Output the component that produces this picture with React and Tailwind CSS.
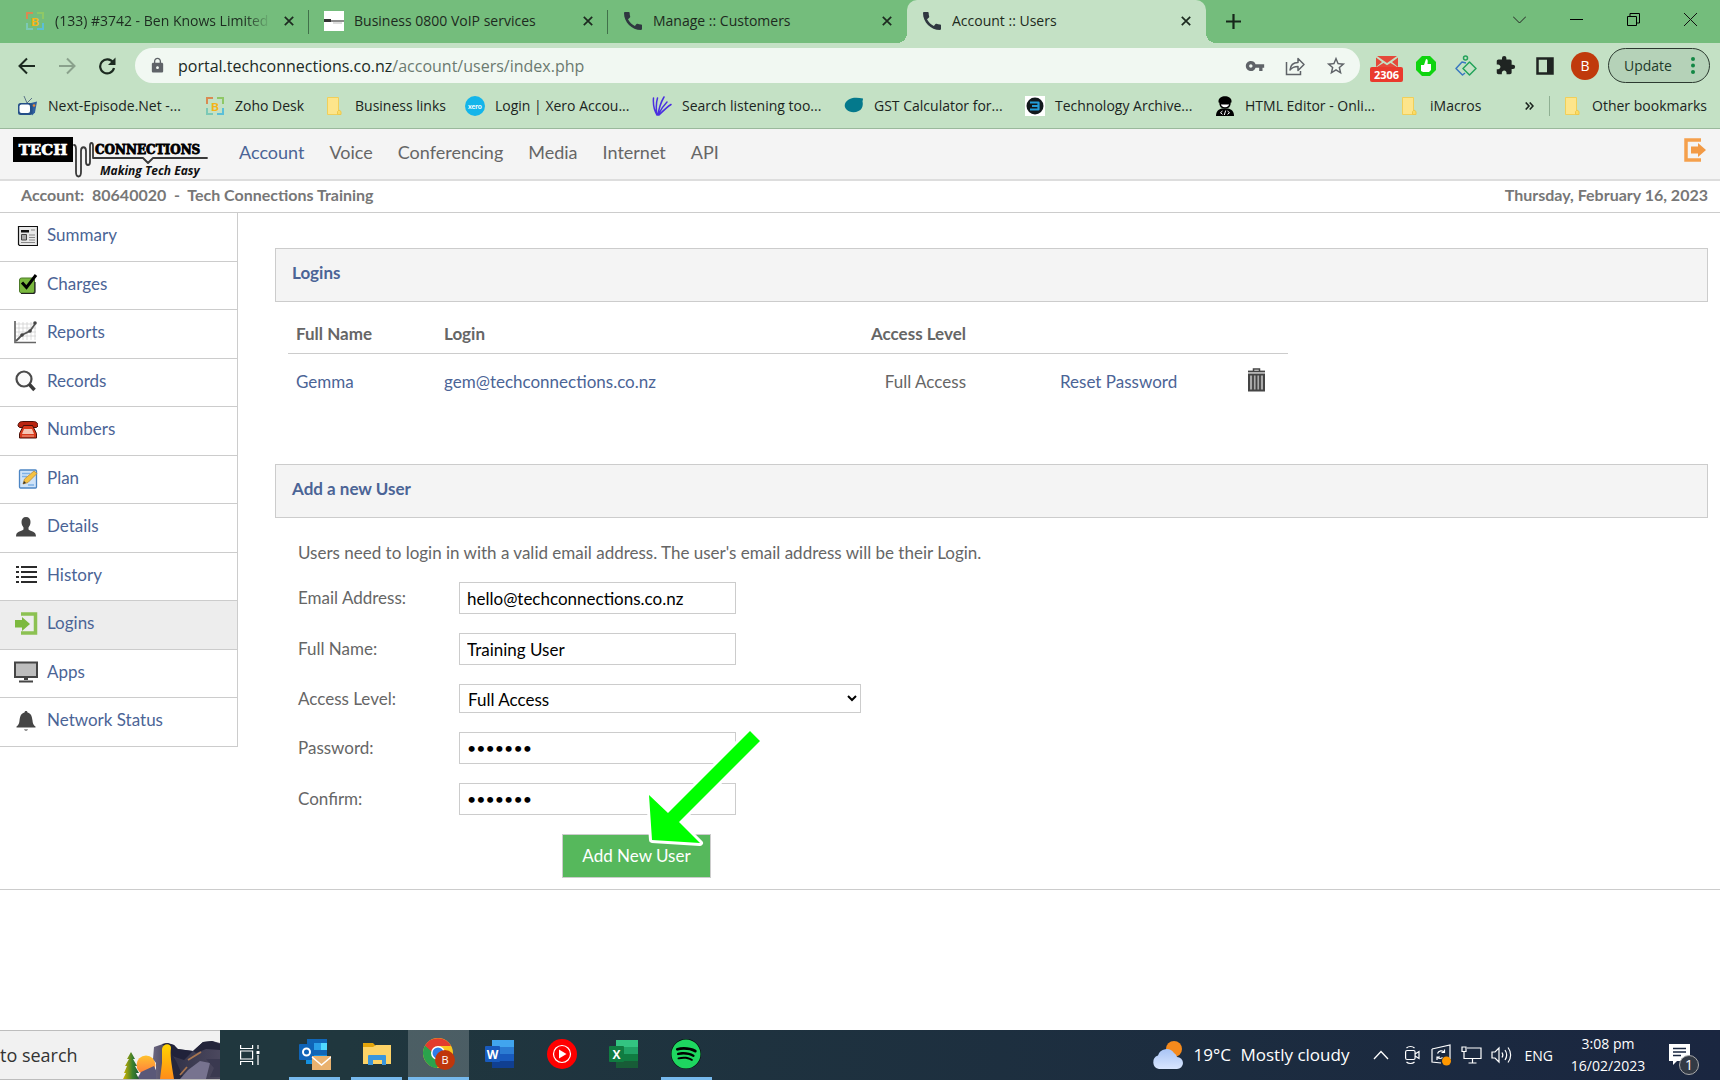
import React from "react";
import { MdCall, MdExtension, MdLock, MdStarBorder, MdVpnKey } from "react-icons/md";
import { FaSpotify } from "react-icons/fa";

/* ---------- browser icons ---------- */

const BrandB = () => (
  <svg viewBox="0 0 20 20" className="size-5 shrink-0" fill="none" strokeWidth="2">
    <path d="M2 8V2h6" stroke="#d98a52" />
    <path d="M12 2h6v6" stroke="#8fc866" />
    <path d="M18 12v6h-6" stroke="#5bbfd8" />
    <path d="M8 18H2v-6" stroke="#7cc9b6" />
    <text x="10" y="14.5" textAnchor="middle" fontSize="12" fontWeight="900" fontFamily="Lato, sans-serif" fill="#f5b417">B</text>
  </svg>
);
const SiteThumb = () => (
  <svg viewBox="0 0 20 20" className="size-5 shrink-0">
    <rect width="20" height="20" fill="#fff" />
    <rect y="8" width="7" height="3" fill="#333" />
    <path d="M7 10h13" stroke="#666" strokeWidth="1.500" /><path d="M9 12h9" stroke="#bbb" strokeWidth="1" />
  </svg>
);
const Phone = () => <MdCall className="size-6 -mx-0.5 shrink-0 text-[#2f3740]" />;

const CloseX = ({ label }) => (
  <button aria-label={label} className="flex size-4 shrink-0 items-center justify-center">
    <svg viewBox="0 0 10 10" className="size-[10px]"><path d="M.8.8l8.4 8.4M9.2.8L.8 9.2" stroke="#1d2a20" strokeWidth="1.700" /></svg>
  </button>
);

const Folder = () => (
  <svg viewBox="0 0 16 20" className="h-5 w-4 shrink-0">
    <path d="M1.500 1.500h11v13l2 1v3h-13z" fill="#fde58b" stroke="#f0cf5a" />
    <path d="M11.500 18.500v-3l1.500-1.500 2 1.500v3z" fill="#fbdc66" stroke="#eec84c" />
  </svg>
);
const Tv = () => (
  <svg viewBox="0 0 20 20" className="size-5 shrink-0">
    <path d="M9 7L6 0M9 7l5-5" stroke="#5b7488" fill="none" />
    <path d="M13 7l6-1.500-2 11-3 3z" fill="#2f5f9e" />
    <rect x="0" y="7" width="14.500" height="12" rx="2.500" fill="#244f88" />
    <rect x="1.500" y="8.500" width="10.500" height="8.500" rx="2" fill="#fff" />
    <circle cx="16" cy="9.500" r="1.300" fill="#e8883a" />
  </svg>
);
const Xero = () => (
  <svg viewBox="0 0 20 20" className="size-5 shrink-0">
    <circle cx="10" cy="10" r="10" fill="#13b5ea" />
    <text x="10" y="12.500" textAnchor="middle" fontSize="7" fontWeight="700" fontFamily="Lato, sans-serif" fill="#fff">xero</text>
  </svg>
);
const Rays = () => (
  <svg viewBox="0 0 20 20" className="size-5 shrink-0" stroke="#4a2fe0" strokeWidth="1.500" fill="none" strokeLinecap="round">
    <path d="M5 19C2 14 1 8 1.500 2M5 19C4 13 4 7 5.500 2M6 19C7 12 9 6 12 1M6 19C9 13 12 9 15 6M7 19C11 15 15 11 19 8.500" />
  </svg>
);
const Blob = () => (
  <svg viewBox="0 0 20 20" className="size-5 shrink-0"><path d="M4 4c4-3 10-2.500 15-1.500 0 1.500-.5 2-.5 3 1 4-.5 8-4 9.500-4 2-9 1.500-12-1.500-3-3-2-7 1.500-9.500z" fill="#04798c" /></svg>
);
const Badge3 = () => (
  <svg viewBox="0 0 20 20" className="size-5 shrink-0">
    <rect width="20" height="20" fill="#fff" /><circle cx="10" cy="10" r="8.500" fill="#12181c" />
    <path d="M5 6.500h8.500v7H5M7 10h6.500" stroke="#239bd8" strokeWidth="2.200" fill="none" strokeLinejoin="round" />
  </svg>
);
const Coder = () => (
  <svg viewBox="0 0 20 20" className="size-5 shrink-0">
    <path d="M3.500 5c0-6.500 13-6.500 13 0v1.500h-13z" fill="#000" />
    <path d="M5 6.500h10c0 3-1.500 5.500-5 5.500s-5-2.500-5-5.500z" fill="#fff" stroke="#000" strokeWidth="1.500" />
    <path d="M5 7h10v1.500H5z" fill="#000" />
    <path d="M1 20c0-5 3-7 6-7.500h6c3 .5 6 2.500 6 7.500z" fill="#000" />
    <path d="M7.500 15l-2 1.700 2 1.700M12.500 15l2 1.700-2 1.700M10.700 14.500l-1.400 4.500" stroke="#fff" fill="none" />
  </svg>
);

const tabs = [
  { icon: BrandB, title: "(133) #3742 - Ben Knows Limited", sep: true, fade: true },
  { icon: SiteThumb, title: "Business 0800 VoIP services", sep: true },
  { icon: Phone, title: "Manage :: Customers" },
  { icon: Phone, title: "Account :: Users", active: true },
];

const bookmarks = [
  { icon: Tv, text: "Next-Episode.Net -...", w: "w-[187px]" },
  { icon: BrandB, text: "Zoho Desk", w: "w-[121px]" },
  { icon: Folder, text: "Business links", w: "w-[139px]", folder: true },
  { icon: Xero, text: "Login | Xero Accou...", w: "w-[187px]" },
  { icon: Rays, text: "Search listening too...", w: "w-[192px]" },
  { icon: Blob, text: "GST Calculator for...", w: "w-[181px]" },
  { icon: Badge3, text: "Technology Archive...", w: "w-[190px]" },
  { icon: Coder, text: "HTML Editor - Onli...", w: "w-[186px]" },
  { icon: Folder, text: "iMacros", w: "w-[100px]", folder: true },
];

function TabStrip() {
  return (
    <div className="flex h-[43px] items-stretch bg-[#74bd7c] pl-[10px] text-[14px] text-[#1d2a20]">
      {tabs.map((t) => (
        <div
          key={t.title}
          className={
            "relative flex w-[299px] shrink-0 items-center gap-[10px] pb-0.5 pl-[15px] pr-3 " +
            (t.active ? "rounded-t-[10px] bg-[#c4e1c5]" : "")
          }
        >
          <t.icon />
          <span className={"min-w-0 flex-1 overflow-hidden whitespace-nowrap " + (t.fade ? "[mask-image:linear-gradient(to_right,#000_88%,transparent)]" : "")}>
            {t.title}
          </span>
          <CloseX label={"Close " + t.title} />
          {t.sep && <span className="absolute right-0 top-[10px] h-6 w-px bg-[#41704a]" />}
          {t.active && (
            <>
              <span className="absolute -left-[10px] bottom-0 size-[10px] bg-[radial-gradient(circle_at_0_0,#74bd7c_10px,#c4e1c5_10px)]" />
              <span className="absolute -right-[10px] bottom-0 size-[10px] bg-[radial-gradient(circle_at_100%_0,#74bd7c_10px,#c4e1c5_10px)]" />
            </>
          )}
        </div>
      ))}
      <button aria-label="New tab" className="ml-5 self-center">
        <svg viewBox="0 0 15 15" className="size-[15px]"><path d="M7.500 0v15M0 7.500h15" stroke="#16261a" strokeWidth="2.200" /></svg>
      </button>
      <div className="ml-auto flex h-[38px] items-center gap-[44px] pr-[23px]">
        <button aria-label="Search tabs"><svg viewBox="0 0 13 13" className="size-[13px]"><path d="M0 3.500l6.500 6.500L13 3.500" stroke="#222" fill="none" /></svg></button>
        <button aria-label="Minimise"><svg viewBox="0 0 13 13" className="size-[13px]"><path d="M0 6.500h13" stroke="#000" /></svg></button>
        <button aria-label="Restore"><svg viewBox="0 0 13 13" className="size-[13px]" fill="none" stroke="#000"><path d="M.5 3.500h9v9h-9zM3 3V.5h9.500V10H10" /></svg></button>
        <button aria-label="Close"><svg viewBox="0 0 13 13" className="size-[13px]"><path d="M0 0l13 13M13 0L0 13" stroke="#111" /></svg></button>
      </div>
    </div>
  );
}

function Toolbar() {
  return (
    <div className="flex h-[45px] items-center bg-[#c4e1c5] pl-[18px] pr-[10px]">
      <div className="flex w-[117px] items-center gap-[22px]">
        <button aria-label="Back"><svg viewBox="0 0 18 18" className="size-[18px]" fill="none" stroke="#1c2a20" strokeWidth="2"><path d="M17 9H2M9 1.500L1.500 9 9 16.500" /></svg></button>
        <button aria-label="Forward"><svg viewBox="0 0 18 18" className="size-[18px]" fill="none" stroke="#8aa18c" strokeWidth="2"><path d="M1 9h15M9 1.500L16.500 9 9 16.500" /></svg></button>
        <button aria-label="Reload"><svg viewBox="0 0 18 18" className="size-[18px]"><path d="M15 5.500A7 7 0 1 0 16 11" fill="none" stroke="#1c2a20" strokeWidth="2.200" /><path d="M17.500.5v7.500H10z" fill="#1c2a20" /></svg></button>
      </div>
      <div className="flex h-[35px] flex-1 items-center rounded-full bg-[#f1f8f2] pl-[14px] pr-[13px] text-[#5f6368]">
        <MdLock className="size-[17px]" />
        <div role="textbox" aria-label="Address" className="ml-3 flex-1 text-[16px] text-[#6b7a70]">
          <span className="text-[#202a24]">portal.techconnections.co.nz</span>/account/users/index.php
        </div>
        <div className="flex items-center gap-5">
          <button aria-label="Passwords"><MdVpnKey className="size-5" /></button>
          <button aria-label="Share">
            <svg viewBox="0 0 20 20" className="size-5" fill="none" stroke="#5f6368" strokeWidth="1.500">
              <path d="M1.500 6v12.500h14V15" /><path d="M5 14c.5-5 3-7.500 8-7.500v-4l6 6-6 6v-4c-4 0-6 1-8 3.500z" strokeLinejoin="round" />
            </svg>
          </button>
          <button aria-label="Bookmark"><MdStarBorder className="size-[22px]" /></button>
        </div>
      </div>
      <div className="ml-[10px] flex items-center">
        <button aria-label="Mail" className="flex w-[33px] flex-col items-center pt-[6px]">
          <svg viewBox="0 0 22 11" className="h-[11px] w-[22px]"><path d="M1 0h20L11 7z" fill="#e5493a" /><path d="M0 1.500l6 4.500-6 5zM22 1.500L16 6l6 5zM1 11l6.500-4L11 9.300 14.500 7l6.500 4z" fill="#e5493a" /></svg>
          <span className="w-[33px] rounded-xs bg-[#ea3a2d] text-center text-[11px] leading-[15px] font-bold text-white">2306</span>
        </button>
        <button aria-label="Thumbs up" className="ml-3">
          <svg viewBox="0 0 22 22" className="size-[22px]"><path d="M7 1h8l6 6v8l-6 6H7l-6-6V7z" fill="#0fd40f" /><path d="M6 10h3l2-6c2 0 2 2 1.500 5H16v6l-2 2H8l-2-1z" fill="#fff" /></svg>
        </button>
        <button aria-label="Zoho" className="ml-[18px]">
          <svg viewBox="0 0 22 22" className="size-[22px]" fill="none" strokeWidth="1.500">
            <path d="M11 8L7 7l-6 6.500 6.500 6.500 2.500-2" stroke="#3a78c0" strokeLinejoin="round" /><path d="M14.500 7l6.500 6.500-6.500 6.500L8 13.500z" stroke="#23a35a" strokeLinejoin="round" /><circle cx="10.500" cy="3" r="2" stroke="#23a35a" />
          </svg>
        </button>
        <button aria-label="Extensions" className="ml-[18px]"><MdExtension className="size-[21px] text-[#1f2422]" /></button>
        <button aria-label="Side panel" className="ml-5"><svg viewBox="0 0 18 18" className="size-[18px]"><path d="M1.500 1.500h15v15h-15z" fill="none" stroke="#1f2422" strokeWidth="2.500" /><path d="M11 1h6v16h-6z" fill="#1f2422" /></svg></button>
        <button className="ml-[17px] flex size-7 items-center justify-center rounded-full bg-[#c03a0c] text-[14px] text-white">B</button>
        <button className="ml-[9px] flex h-[35px] w-[102px] items-center justify-between rounded-full border border-[#2c3a30] bg-[#b5d2b8] pl-[15px] pr-[14px] text-[14px] text-[#1f3a2a]">
          Update
          <svg viewBox="0 0 4 17" className="h-[17px] w-1" fill="#128744"><circle cx="2" cy="2" r="2" /><circle cx="2" cy="8.500" r="2" /><circle cx="2" cy="15" r="2" /></svg>
        </button>
      </div>
    </div>
  );
}

function Bookmarks() {
  return (
    <div className="flex h-[41px] items-center border-b border-[#9ab89c] bg-[#c4e1c5] pb-[5px] pl-[18px] text-[14px] text-[#1b241e]">
      {bookmarks.map((b) => (
        <a href="#" key={b.text} className={"flex shrink-0 items-center whitespace-nowrap " + b.w + (b.folder ? " gap-[13px]" : " gap-[10px]")}>
          <b.icon />
          {b.text}
        </a>
      ))}
      <button aria-label="More bookmarks" className="ml-auto"><svg viewBox="0 0 9 8" className="h-2 w-[9px]" fill="none" stroke="#1b241e" strokeWidth="1.600"><path d="M.7.5L4 4 .7 7.500M4.700.5L8 4 4.700 7.500" /></svg></button>
      <span className="ml-[15px] h-5 w-px bg-[#8fb093]" />
      <a href="#" className="ml-[14px] mr-[13px] flex items-center gap-3 whitespace-nowrap"><Folder />Other bookmarks</a>
    </div>
  );
}

/* ---------- portal ---------- */

function Logo() {
  return (
    <svg viewBox="0 0 198 50" className="h-[50px] w-[198px] shrink-0" role="img" aria-label="Tech Connections, Making Tech Easy">
      <rect x="0" y="8" width="60" height="25" fill="#000" />
      <text x="30" y="26" textAnchor="middle" fontFamily="'DejaVu Serif', serif" fontWeight="700" fontSize="15" fill="#fff" stroke="#fff" strokeWidth=".7">TECH</text>
      <path d="M61 16c2 0 2 2 2 4v23c0 6 5 6 5 0V22c0-5 5-5 5 0v11c0 4 4 4 4 0V17c0-4 3-4 3 0v12h50l5 5 5-5h54" fill="none" strokeLinejoin="round" strokeLinecap="round" stroke="#3a3a3a" strokeWidth="1.800" />
      <text x="82" y="25" fontFamily="'DejaVu Serif', serif" fontWeight="700" fontSize="12" fill="#000" stroke="#000" strokeWidth=".8">CONNECTIONS</text>
      <text x="87" y="46" fontFamily="'Open Sans', sans-serif" fontWeight="700" fontStyle="italic" fontSize="12" fill="#111">Making Tech Easy</text>
    </svg>
  );
}

const ic = "size-6";
const SummaryIcon = () => (
  <svg viewBox="0 0 24 24" className={ic}><path d="M4.500 3.500h19v19h-18l-1-1z" fill="#e8e8e8" stroke="#111" strokeWidth="1.200" /><path d="M7 7h8v2.500H7z" fill="#111" /><path d="M17 7h4M15 12h6M15 14.500h6M15 17h6M7 19.500h14" stroke="#888" /><path d="M7.500 11.500h5v5.500h-5z" fill="#aaa" stroke="#444" /></svg>
);
const ChargesIcon = () => (
  <svg viewBox="0 0 24 24" className={ic}><rect x="5.500" y="6" width="15" height="15" rx="2" fill="#7ab83e" stroke="#4c7a28" /><path d="M7 21.500h12q2 0 2-2V10" stroke="#222" strokeWidth="1.200" fill="none" /><path d="M8 10.500l4.500 5L22 3" fill="none" stroke="#000" strokeWidth="3" /></svg>
);
const ReportsIcon = () => (
  <svg viewBox="0 0 24 24" className={ic}><path d="M5 2v18M9 2v18M13 2v18M17 2v18M21 2v18M2 4h20M2 8h20M2 12h20M2 16h20" stroke="#ccc" strokeWidth=".7" /><path d="M1 1v21.500H22" fill="none" stroke="#666" strokeWidth="1.700" /><path d="M2 21l6-6 8-4L21 4" fill="none" stroke="#555" strokeWidth="1.800" /><g fill="#444"><circle cx="8" cy="15" r="1.800" /><circle cx="16" cy="11" r="1.800" /><circle cx="21" cy="3" r="1.800" /></g></svg>
);
const RecordsIcon = () => (
  <svg viewBox="0 0 24 24" className={ic}><circle cx="10" cy="10" r="7.500" fill="#fafafa" stroke="#4a4a4a" strokeWidth="2.200" /><path d="M15 15l5.500 6" stroke="#3a3a3a" strokeWidth="3.500" /></svg>
);
const NumbersIcon = () => (
  <svg viewBox="0 0 24 24" className={ic}><path d="M4 9c0-4 3-4.500 5-4.500h10c2 0 5 .5 5 4.500l-1.500 1.500H18.500V8.500h-9v2H5.500z" fill="#b92410" stroke="#4d1109" /><path d="M9.500 8.500h9l4 8V21h-17v-4.500z" fill="#d83a1c" stroke="#4d1109" /><path d="M10 12h8l2 5H8z" fill="#f6c6b4" /><path d="M8 19h12" stroke="#f0a890" /></svg>
);
const PlanIcon = () => (
  <svg viewBox="0 0 24 24" className={ic}><rect x="5.500" y="4" width="17" height="18" rx="1" fill="#cfe3f8" stroke="#4d86c4" strokeWidth="1.300" /><path d="M8 7.500h8M8 10.500h5M14 19h6" stroke="#7fb2e6" strokeWidth="1.500" /><path d="M9 18l1.500-5L20 5l3 2.500-9 9z" fill="#f5c242" stroke="#b98a3a" strokeWidth=".8" /><path d="M9 18l1-3 2 2z" fill="#333" /></svg>
);
const DetailsIcon = () => (
  <svg viewBox="0 0 24 24" className={ic}><path d="M12 3c3 0 4.500 2 4.500 5 0 2.500-1 4-2 5.500v2c2.500 2 7.500 1.500 7.500 7H2c0-5.500 5-5 7.500-7v-2c-1-1.500-2-3-2-5.500 0-3 1.500-5 4.500-5z" fill="#454545" /></svg>
);
const HistoryIcon = () => (
  <svg viewBox="0 0 24 24" className={ic}><path d="M7 4h16M7 9h16M7 14h16M7 19h16" stroke="#2b2b2b" strokeWidth="2.200" /><path d="M2 4h3M2 9h3M2 14h3M2 19h3" stroke="#2b2b2b" strokeWidth="2.200" /></svg>
);
const LoginsIcon = () => (
  <svg viewBox="0 0 24 24" className={ic}><path d="M7 3h14.500v19H7" fill="none" stroke="#8cc152" strokeWidth="3.500" /><path d="M1 9h7V6l8 7-8 7v-3.500H1z" fill="#7db93f" /></svg>
);
const AppsIcon = () => (
  <svg viewBox="0 0 24 24" className={ic}><rect x="1" y="2.500" width="22" height="14.500" fill="#bdbdbd" stroke="#454545" strokeWidth="2" /><path d="M10 17h4v3h-4z" fill="#454545" /><path d="M5 21.500h14" stroke="#454545" strokeWidth="2" /></svg>
);
const BellIcon = () => (
  <svg viewBox="0 0 24 24" className={ic}><path d="M12 3c1 0 1.500.7 1.500 1.500 4 1 4.500 4.500 5 8 .4 3.500 1 4.500 3 6v1h-19v-1c2-1.500 2.600-2.500 3-6 .5-3.500 1-7 5-8C10.500 3.700 11 3 12 3z" fill="#454545" /><path d="M10 21.500h4c-.5 1.500-3.500 1.500-4 0z" fill="#454545" /></svg>
);
const Trash = () => (
  <svg viewBox="0 0 20 24" className="h-6 w-5"><path d="M6.500 3V1h6v2" fill="none" stroke="#444" strokeWidth="1.500" /><path d="M1 3.500h17" stroke="#444" strokeWidth="1.800" /><rect x="2" y="6.500" width="15" height="16" fill="#aaa" stroke="#444" strokeWidth="2" /><path d="M6 7v15M9.500 7v15M13 7v15" stroke="#444" strokeWidth="1.800" /></svg>
);

const menu = [
  ["Summary", SummaryIcon], ["Charges", ChargesIcon], ["Reports", ReportsIcon], ["Records", RecordsIcon],
  ["Numbers", NumbersIcon], ["Plan", PlanIcon], ["Details", DetailsIcon], ["History", HistoryIcon],
  ["Logins", LoginsIcon], ["Apps", AppsIcon], ["Network Status", BellIcon],
];

const inputCls = "h-8 w-[277px] border border-[#ccc] bg-white px-[7px] text-black";

function Panel({ title }) {
  return <h2 className="h-[54px] border border-[#ccc] bg-[#f4f4f4] pl-4 pt-3 font-bold leading-6 text-[#4b6496]">{title}</h2>;
}

function Portal() {
  return (
    <div className="flex-1 bg-white font-[Lato,sans-serif] text-[17px] leading-6 text-[#666]">
      <header className="flex h-[52px] items-center border-b-2 border-[#ddd] bg-[#f4f4f4] pl-[13px] pr-[13px]">
        <Logo />
        <nav className="ml-7 flex gap-[25px] pb-[5px] text-[18px]">
          <a href="#" className="text-[#4b6496]">Account</a>
          <a href="#">Voice</a><a href="#">Conferencing</a><a href="#">Media</a><a href="#">Internet</a><a href="#">API</a>
        </nav>
        <button aria-label="Log out" className="ml-auto pb-2">
          <svg viewBox="0 0 24 24" className="size-6"><path d="M18 2H3v20h15" fill="none" stroke="#f5a04c" strokeWidth="3.500" /><path d="M8 8.500h7V5l8 7-8 7v-3.500H8z" fill="#f29a45" /></svg>
        </button>
      </header>
      <div className="flex h-8 items-center justify-between border-b border-[#ccc] pb-[3px] pl-[21px] pr-3 text-[16px] font-bold text-[#777]">
        <span className="whitespace-pre">Account:  80640020  -  Tech Connections Training</span>
        <span>Thursday, February 16, 2023</span>
      </div>
      <div className="flex items-start border-b border-[#ccc]">
        <nav className="w-[238px] shrink-0 border-r border-[#ccc]">
          {menu.map(([name, Icon]) => (
            <a key={name} href="#" className={"flex h-12 items-center gap-[9px] border-b border-[#ccc] pb-1 pl-[14px] text-[#4b6496] odd:h-[49px] " + (name === "Logins" ? "bg-[#ededed]" : "")}>
              <Icon />
              <span>{name}</span>
            </a>
          ))}
        </nav>
        <main className="min-w-0 flex-1 pb-[11px] pl-[37px] pr-3 pt-[35px]">
          <Panel title="Logins" />
          <table className="ml-[13px] w-[1000px] table-fixed">
            <colgroup><col className="w-[148px]" /><col className="w-[390px]" /><col className="w-[148px]" /><col className="w-[265px]" /><col /></colgroup>
            <thead>
              <tr className="border-b border-[#ccc] text-left">
                <th className="pb-[7px] pl-2 pt-5">Full Name</th>
                <th className="pb-[7px] pl-2 pt-5">Login</th>
                <th className="pb-[7px] pr-2 pt-5 text-right">Access Level</th>
                <th aria-label="Password" />
                <th aria-label="Delete" />
              </tr>
            </thead>
            <tbody>
              <tr className="text-[#4b6496]">
                <td className="pb-[14px] pl-2 pt-4"><a href="#">Gemma</a></td>
                <td className="pb-[14px] pl-2 pt-4"><a href="#">gem@techconnections.co.nz</a></td>
                <td className="pb-[14px] pr-2 pt-4 text-right text-[#666]">Full Access</td>
                <td className="pb-[14px] pl-[86px] pt-4"><a href="#">Reset Password</a></td>
                <td className="pb-[3px] pl-2"><button aria-label="Delete Gemma" className="block"><Trash /></button></td>
              </tr>
            </tbody>
          </table>
          <div className="mt-14"><Panel title="Add a new User" /></div>
          <form className="pl-[23px] pt-[23px]" onSubmit={(e) => e.preventDefault()}>
            <p>Users need to login in with a valid email address. The user's email address will be their Login.</p>
            <div className="relative mt-[17px] grid w-[563px] grid-cols-[161px_1fr] items-center gap-y-[19px]">
              <label htmlFor="email">Email Address:</label>
              <input id="email" type="text" defaultValue="hello@techconnections.co.nz" className={inputCls} />
              <label htmlFor="name">Full Name:</label>
              <input id="name" type="text" defaultValue="Training User" className={inputCls} />
              <label htmlFor="level">Access Level:</label>
              <select id="level" className="h-[29px] w-full border border-[#ccc] bg-white pl-1 pt-0.5 text-black"><option>Full Access</option></select>
              <label htmlFor="pw">Password:</label>
              <input id="pw" type="password" defaultValue="trainin" className={inputCls + " pb-0.5 text-[16px]"} />
              <label htmlFor="pw2">Confirm:</label>
              <input id="pw2" type="password" defaultValue="trainin" className={inputCls + " pb-0.5 text-[16px]"} />
              <button type="submit" className="col-start-2 ml-[103px] h-11 w-[149px] border border-[#ccc] bg-[#56b85c] text-white">Add New User</button>
              <svg viewBox="0 0 120 120" className="pointer-events-none absolute left-[346px] top-[145px] size-[120px]" aria-hidden="true">
                <path d="M106 4l10 10-81 81 21 21-48-3-3-45 19 18z" fill="#00ff00" stroke="#fff" strokeWidth="6" strokeLinejoin="round" paintOrder="stroke" />
              </svg>
            </div>
          </form>
        </main>
      </div>
    </div>
  );
}

/* ---------- taskbar ---------- */

function SearchArt() {
  return (
    <svg viewBox="0 0 98 38" className="h-[38px] w-[98px] shrink-0">
      <defs>
        <linearGradient id="fall" x2="0" y2="1"><stop stopColor="#ffd400" /><stop offset="1" stopColor="#ff8c1a" /></linearGradient>
        <linearGradient id="sun" x2="0" y2="1"><stop stopColor="#ffc22e" /><stop offset="1" stopColor="#ff7a3c" /></linearGradient>
        <linearGradient id="tree"><stop stopColor="#d4b400" /><stop offset=".6" stopColor="#3b7f2d" /><stop offset="1" stopColor="#1d5a35" /></linearGradient>
        <linearGradient id="rock"><stop stopColor="#6b6680" /><stop offset=".35" stopColor="#34344a" /><stop offset="1" stopColor="#4b485e" /></linearGradient>
      </defs>
      <circle cx="24" cy="24" r="9.500" fill="url(#sun)" />
      <path d="M15 38l4-7 13-6 6 13z" fill="#5a5878" />
      <path d="M34 38V22l-3-4 1-12 12-4 8 2 3 4 16 2 10-9 9-1 8 2v36z" fill="url(#rock)" />
      <path d="M40 3l6-1 6 2 4 4 15 2-9 9-12-4-5-8z" fill="#20223a" />
      <path d="M71 10l10-9 9-1 8 3v6L84 8 74 12z" fill="#23243a" />
      <path d="M47 8l7 12 8 18H51z" fill="#25273d" />
      <path d="M58 38l8-9 12-9 10 2-4 16z" fill="#77738f" />
      <path d="M84 18l8 9-4 9h10V18z" fill="#3a3950" />
      <path d="M66 19l13-8M58 34l7-8" stroke="#a8754f" strokeWidth="1.800" />
      <path d="M38 38l2-16V8c1-6 9-6 9-1-1 6 0 14 3 31z" fill="url(#fall)" />
      <path d="M9 11l4 7h-2l4 7h-2l4 7h-3l3 6H1l3-6H2l3-7H3l4-7H5z" fill="url(#tree)" />
    </svg>
  );
}

function AppButton({ label, children, running, active, className }) {
  return (
    <button aria-label={label} className={"flex h-full shrink-0 flex-col items-center " + className + (active ? " bg-white/20" : "")}>
      <span className="flex flex-1 items-center pt-px">{children}</span>
      <span className={"h-[3px] " + (running ? "bg-[#76b9ed] " : "") + (active ? "w-full" : "w-[51px]")} />
    </button>
  );
}

const OfficeTile = ({ letter, c }) => (
  <svg viewBox="0 0 30 28" className="h-7 w-[30px]">
    <rect x="7" y="0" width="22" height="7" fill={c[0]} /><rect x="7" y="7" width="22" height="7" fill={c[1]} />
    <rect x="7" y="14" width="22" height="7" fill={c[2]} /><rect x="7" y="21" width="22" height="7" fill={c[3]} />
    <rect x="0" y="6" width="15" height="16" rx="1" fill={c[4]} />
    <text x="7.500" y="18.500" textAnchor="middle" fontSize="12" fontWeight="700" fontFamily="'Open Sans', sans-serif" fill="#fff">{letter}</text>
  </svg>
);

function Taskbar() {
  return (
    <footer className="flex h-[50px] shrink-0 items-center bg-linear-to-r from-[#20373e] from-20% to-[#1a2640] text-white">
      <div className="flex h-full w-[220px] shrink-0 items-center justify-end overflow-hidden border-y border-[#bdbdbd] bg-[#f1f1f1]">
        <span className="flex-1 text-[18px] text-[#333]">to search</span>
        <span className="self-end"><SearchArt /></span>
      </div>
      <button aria-label="Task view" className="ml-5">
        <svg viewBox="0 0 20 20" className="size-5" fill="none" stroke="#fff" strokeWidth="1.200"><path d="M.6 0v3.500h12V0M.6 20v-3.500h12V20M.6 6h12v8H.6zM18 0v4M18 10v10" /><path d="M16.500 6h3v3h-3z" fill="#fff" stroke="none" /></svg>
      </button>
      <AppButton label="Outlook" running className="ml-6 w-[61px]">
        <svg viewBox="0 0 32 32" className="size-8">
          <rect x="8" y="1" width="20" height="16" fill="#1066b8" /><rect x="15" y="5" width="7" height="7" fill="#2a9fe8" /><rect x="22" y="5" width="6" height="7" fill="#50d9ff" />
          <path d="M7 17h21v9H7z" fill="#1490df" /><rect x="0" y="6" width="15" height="16" rx="1" fill="#0f64b8" />
          <circle cx="7.500" cy="14" r="3.500" fill="none" stroke="#fff" strokeWidth="2" /><rect x="13" y="18" width="19" height="14" fill="#eab26f" /><path d="M13 19l9.500 8 9.500-8" fill="none" stroke="#fff" strokeWidth="1.500" />
        </svg>
      </AppButton>
      <AppButton label="File Explorer" running className="w-[63px]">
        <svg viewBox="0 0 28 24" className="h-6 w-7"><path d="M0 1h10l3 3h14v18H0z" fill="#e4a50b" /><path d="M0 5h10l3-2h15v19H0z" fill="#fdd367" /><path d="M5 23v-9q0-1 1-1h16q1 0 1 1v9h-4v-5h-9v5z" fill="#3a96dd" /></svg>
      </AppButton>
      <AppButton label="Chrome" running active className="w-[61px]">
        <svg viewBox="0 0 32 32" className="size-8">
          <circle cx="15" cy="15" r="15" fill="#fbc51e" /><path d="M2 7.500A15 15 0 0 0 14 30l7-12-6-3z" fill="#2ba24c" /><path d="M2 7.500A15 15 0 0 1 28 8H15l-6 6z" fill="#e33b2e" />
          <circle cx="15" cy="15" r="7" fill="#fff" /><circle cx="15" cy="15" r="5.500" fill="#2d7de9" /><circle cx="22" cy="22" r="10" fill="#bf360c" />
          <text x="22" y="26" textAnchor="middle" fontSize="11" fontFamily="'Open Sans', sans-serif" fill="#fff">B</text>
        </svg>
      </AppButton>
      <AppButton label="Word" className="w-[62px]"><OfficeTile letter="W" c={["#41a5ee", "#2b7cd3", "#185abd", "#103f91", "#185abd"]} /></AppButton>
      <AppButton label="YouTube Music" className="w-[62px]">
        <svg viewBox="0 0 30 30" className="size-[30px]"><circle cx="15" cy="15" r="15" fill="#f00" /><circle cx="15" cy="15" r="8.500" fill="none" stroke="#fff" strokeWidth="1.200" /><path d="M12 10.500l7.500 4.500-7.500 4.500z" fill="#fff" /></svg>
      </AppButton>
      <AppButton label="Excel" className="w-[62px]"><OfficeTile letter="X" c={["#33c481", "#21a366", "#107c41", "#185c37", "#107c41"]} /></AppButton>
      <AppButton label="Spotify" running className="w-[62px]">
        <span className="rounded-full bg-black"><FaSpotify className="size-[30px] text-[#1ed760]" /></span>
      </AppButton>
      <div className="ml-auto flex h-full shrink-0 items-center pr-5">
        <svg viewBox="0 0 32 30" className="h-[30px] w-8"><defs><linearGradient id="cloud" x2="0" y2="1"><stop stopColor="#a9c4f5" /><stop offset="1" stopColor="#d8e6ff" /></linearGradient></defs><circle cx="22" cy="9" r="8" fill="#f58a1c" /><path d="M7 29a7 7 0 0 1-1-13.500A9 9 0 0 1 22 13a6 6 0 0 1 3 4 6 6 0 0 1 0 12z" fill="url(#cloud)" /></svg>
        <span className="ml-[10px] w-[47px] text-[17px]">19°C</span>
        <span className="w-[132px] whitespace-nowrap text-[17px]">Mostly cloudy</span>
        <svg viewBox="0 0 16 10" className="h-[10px] w-4"><path d="M1 9l7-7.500L15 9" fill="none" stroke="#fff" strokeWidth="1.300" /></svg>
        <svg viewBox="0 0 15 20" className="ml-4 h-5 w-[15px]" fill="none" stroke="#fff" strokeWidth="1.200"><rect x=".6" y="5.500" width="9.500" height="9" rx="1.500" /><path d="M10 9l4-2.500v7L10 11M1.500 3c2-2 6-2 8 0M1.500 17c2 2 6 2 8 0" /></svg>
        <svg viewBox="0 0 20 22" className="ml-[11px] h-[22px] w-5" fill="none" stroke="#fff" strokeWidth="1.200"><path d="M1 5l18-4v14M1 5v13l9 1" /><path d="M13.500 8.500a4 4 0 0 0-7 1M6.500 13.500a4 4 0 0 0 5 0M13.500 5.500v3h-3M6 16v-3h3" /><circle cx="15.500" cy="17" r="4.500" fill="#ff9800" stroke="none" /></svg>
        <svg viewBox="0 0 21 18" className="ml-[10px] h-[18px] w-[21px]" fill="none" stroke="#fff" strokeWidth="1.200"><path d="M6 2h14v10.500H3V7M11.500 12.500v4M7.500 17h8M1 1h4v4.500H1zM3 5v3" /></svg>
        <svg viewBox="0 0 21 18" className="ml-[9px] h-[18px] w-[21px]" fill="none" stroke="#fff" strokeWidth="1.200"><path d="M1 6h3l4-4v14l-4-4H1z" /><path d="M11 6.500c1 1.500 1 3.500 0 5M14 4c2 3 2 7 0 10M17 1.500c3.500 4.500 3.500 10.500 0 15" /></svg>
        <span className="ml-[13px] text-[14px]">ENG</span>
        <div className="ml-[14px] w-[82px] text-center text-[14px] leading-[22px]">3:08 pm<br />16/02/2023</div>
        <button aria-label="Notifications" className="ml-5 pt-2">
          <svg viewBox="0 0 31 31" className="size-[31px]"><path d="M0 0h21v17H8l-4 4v-4H0z" fill="#fff" /><path d="M4 4.500h13M4 8h13M4 11.500h8" stroke="#1a2740" strokeWidth="1.300" /><circle cx="20" cy="21" r="9.500" fill="#333a45" stroke="#aaa" /><text x="20" y="26" textAnchor="middle" fontSize="14" fontFamily="'Open Sans', sans-serif" fill="#fff">1</text></svg>
        </button>
      </div>
    </footer>
  );
}

export default function App() {
  return (
    <div className="flex min-h-screen flex-col overflow-x-hidden font-['Open_Sans',sans-serif]">
      <TabStrip />
      <Toolbar />
      <Bookmarks />
      <Portal />
      <Taskbar />
    </div>
  );
}
